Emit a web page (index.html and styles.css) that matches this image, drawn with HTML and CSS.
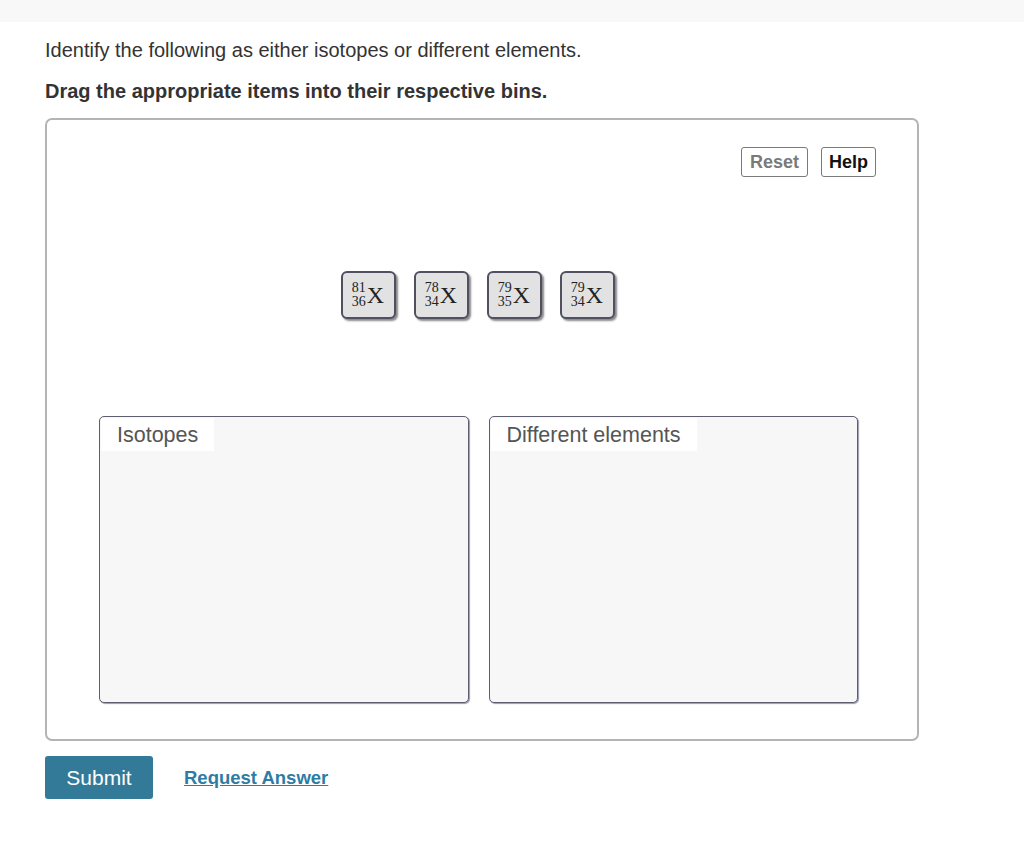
FILE: index.html
```html
<!DOCTYPE html>
<html>
<head>
<meta charset="utf-8">
<link rel="stylesheet" href="styles.css">
</head>
<body>
<div class="topbar"></div>
<main class="content">
  <p class="intro">Identify the following as either isotopes or different elements.</p>
  <p class="instr">Drag the appropriate items into their respective bins.</p>
  <section class="panel">
    <div class="toolbar">
      <button class="tool reset">Reset</button>
      <button class="tool help">Help</button>
    </div>
    <div class="tiles">
      <div class="tile"><span class="nums"><span>81</span><span>36</span></span><span class="sym">X</span></div>
      <div class="tile"><span class="nums"><span>78</span><span>34</span></span><span class="sym">X</span></div>
      <div class="tile"><span class="nums"><span>79</span><span>35</span></span><span class="sym">X</span></div>
      <div class="tile"><span class="nums"><span>79</span><span>34</span></span><span class="sym">X</span></div>
    </div>
    <div class="bins">
      <div class="bin"><div class="bin-label">Isotopes</div></div>
      <div class="bin"><div class="bin-label">Different elements</div></div>
    </div>
  </section>
  <div class="actions">
    <button class="submit">Submit</button>
    <a class="request" href="#">Request Answer</a>
  </div>
</main>
</body>
</html>
```
FILE: styles.css
```css
* { box-sizing: border-box; }
body {
  margin: 0;
  background: #fff;
  font-family: "Liberation Sans", Arial, sans-serif;
  color: #333;
}
.topbar {
  height: 22px;
  background: #f8f8f8;
}
.content {
  padding: 0 0 0 45px;
  width: 919px;
}
.intro {
  margin: 16px 0 0;
  font-size: 20px;
  line-height: 24px;
}
.instr {
  margin: 17px 0 0;
  font-size: 20px;
  line-height: 24px;
  font-weight: bold;
}
.panel {
  margin-top: 15px;
  border: 2px solid #b4b4b4;
  border-radius: 7px;
  padding: 27px 59px 36px 52px;
}
.toolbar {
  display: flex;
  justify-content: flex-end;
  gap: 13px;
  margin-right: -18px;
}
.tool {
  height: 30px;
  background: #fff;
  border: 1px solid #7a7a7a;
  border-radius: 3px;
  font-family: "Liberation Sans", Arial, sans-serif;
  font-weight: bold;
  font-size: 18px;
  padding: 0;
}
.reset { color: #7a7a7a; width: 67px; }
.help { color: #111; width: 55px; }
.tiles {
  display: flex;
  justify-content: center;
  gap: 18px;
  margin-top: 94px;
  padding-right: 2px;
}
.tile {
  width: 55px;
  height: 48px;
  background: #e2e2e2;
  border: 2px solid #505060;
  border-radius: 6px;
  box-shadow: 2px 2px 2px #8a8a8a;
  display: flex;
  align-items: center;
  justify-content: center;
  font-family: "Liberation Serif", "Times New Roman", serif;
  color: #222;
}
.nums {
  display: flex;
  flex-direction: column;
  font-size: 14px;
  line-height: 14px;
}
.sym {
  font-size: 24px;
  line-height: 24px;
  margin-left: 1px;
  margin-top: -1px;
}
.bins {
  display: flex;
  gap: 20px;
  margin-top: 97px;
}
.bin {
  width: 370px;
  height: 287px;
  background: #f7f7f7;
  border: 1px solid #5e5e70;
  border-radius: 5px;
  box-shadow: 1px 1px 1px #9a9ab0;
  padding: 1px;
}
.bin-label {
  display: inline-block;
  background: #fff;
  color: #555;
  font-size: 21.5px;
  line-height: 31px;
  padding: 2px 16px 0;
}
.actions {
  display: flex;
  align-items: center;
  margin-top: 15px;
}
.submit {
  width: 108px;
  height: 43px;
  background: #337a98;
  color: #fff;
  border: none;
  border-radius: 3px;
  font-family: "Liberation Sans", Arial, sans-serif;
  font-size: 21px;
}
.request {
  margin-left: 31px;
  color: #2e7ca4;
  font-weight: bold;
  font-size: 18.5px;
  text-decoration: underline;
}
```
